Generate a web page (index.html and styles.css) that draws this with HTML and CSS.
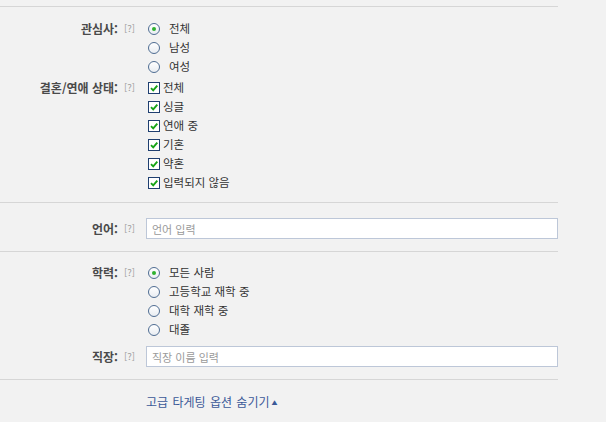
FILE: index.html
```html
<!DOCTYPE html>
<html lang="ko">
<head>
  <meta charset="UTF-8">
  <title>고급 타게팅 옵션</title>
  <link rel="stylesheet" href="styles.css">
</head>
<body>
  <div class="targeting">

    <div class="section">
      <div class="field">
        <label class="field-label">관심사:</label>
        <span class="help">[?]</span>
        <div class="options">
          <div class="option"><span class="radio checked"></span><span class="radio-text">전체</span></div>
          <div class="option"><span class="radio"></span><span class="radio-text">남성</span></div>
          <div class="option"><span class="radio"></span><span class="radio-text">여성</span></div>
        </div>
      </div>
      <div class="field">
        <label class="field-label">결혼/연애 상태:</label>
        <span class="help">[?]</span>
        <div class="options">
          <div class="option"><span class="checkbox checked"><svg viewBox="0 0 10 10"><path d="M2 5.2 L4.2 7.4 L8.3 2.6" /></svg></span>전체</div>
          <div class="option"><span class="checkbox checked"><svg viewBox="0 0 10 10"><path d="M2 5.2 L4.2 7.4 L8.3 2.6" /></svg></span>싱글</div>
          <div class="option"><span class="checkbox checked"><svg viewBox="0 0 10 10"><path d="M2 5.2 L4.2 7.4 L8.3 2.6" /></svg></span>연애 중</div>
          <div class="option"><span class="checkbox checked"><svg viewBox="0 0 10 10"><path d="M2 5.2 L4.2 7.4 L8.3 2.6" /></svg></span>기혼</div>
          <div class="option"><span class="checkbox checked"><svg viewBox="0 0 10 10"><path d="M2 5.2 L4.2 7.4 L8.3 2.6" /></svg></span>약혼</div>
          <div class="option"><span class="checkbox checked"><svg viewBox="0 0 10 10"><path d="M2 5.2 L4.2 7.4 L8.3 2.6" /></svg></span>입력되지 않음</div>
        </div>
      </div>
    </div>

    <div class="section section-input">
      <div class="field field-inline">
        <label class="field-label" for="language">언어:</label>
        <span class="help">[?]</span>
        <input type="text" id="language" class="text-input" placeholder="언어 입력">
      </div>
    </div>

    <div class="section section-edu">
      <div class="field">
        <label class="field-label">학력:</label>
        <span class="help">[?]</span>
        <div class="options">
          <div class="option"><span class="radio checked"></span><span class="radio-text">모든 사람</span></div>
          <div class="option"><span class="radio"></span><span class="radio-text">고등학교 재학 중</span></div>
          <div class="option"><span class="radio"></span><span class="radio-text">대학 재학 중</span></div>
          <div class="option"><span class="radio"></span><span class="radio-text">대졸</span></div>
        </div>
      </div>
      <div class="field field-inline field-work">
        <label class="field-label" for="workplace">직장:</label>
        <span class="help">[?]</span>
        <input type="text" id="workplace" class="text-input" placeholder="직장 이름 입력">
      </div>
    </div>

    <div class="section section-link">
      <a href="#" class="toggle-link">고급 타게팅 옵션 숨기기<span class="arrow">▲</span></a>
    </div>

  </div>
</body>
</html>
```

FILE: styles.css
```css
body {
  margin: 0;
  background-color: #f2f2f2;
  font-family: "Noto Sans CJK KR", "Liberation Sans", sans-serif;
  font-size: 11.5px;
  color: #333;
}

.targeting {
  width: 558px;
  margin-top: 6px;
}

.section {
  border-top: 1px solid #d6d6d6;
  padding: 12px 0 10px;
}

.field {
  display: grid;
  grid-template-columns: 118px 28px 412px;
  align-items: start;
}

.field + .field {
  margin-top: 2px;
}

.field-label {
  text-align: right;
  font-weight: bold;
  font-size: 12px;
  line-height: 19px;
  color: #4a4a4a;
}

.help {
  padding-left: 6px;
  font-size: 9.5px;
  line-height: 19px;
  color: #a0a0a0;
}

.option {
  display: flex;
  align-items: center;
  height: 19px;
  line-height: 19px;
  white-space: nowrap;
}

.radio {
  box-sizing: border-box;
  width: 12px;
  height: 12px;
  margin-left: 2px;
  margin-right: 9px;
  border: 1px solid #4f6d92;
  border-radius: 50%;
  background: linear-gradient(#ffffff, #e9edf2);
  display: flex;
  align-items: center;
  justify-content: center;
}

.radio.checked::after {
  content: "";
  width: 4px;
  height: 4px;
  border-radius: 50%;
  background-color: #2fb12f;
}

.checkbox {
  box-sizing: border-box;
  width: 12px;
  height: 12px;
  margin-left: 2px;
  margin-right: 3px;
  border: 1px solid #1f3f70;
  background-color: #fff;
  display: flex;
}

.checkbox svg {
  width: 10px;
  height: 10px;
}

.checkbox path {
  fill: none;
  stroke: #16a316;
  stroke-width: 1.9;
}

/* input rows */
.field-inline {
  align-items: center;
}

.section-input {
  padding: 15px 0 12px;
}

.section-edu {
  padding: 11px 0 12px;
}

.field + .field-work {
  margin-top: 7px;
}

.text-input {
  box-sizing: border-box;
  width: 412px;
  height: 21px;
  margin: 0;
  padding: 0 5px;
  border: 1px solid #bdc7d8;
  background-color: #fff;
  font-family: inherit;
  font-size: 11px;
  color: #333;
  outline: none;
}

.text-input::placeholder {
  color: #9a9a9a;
}

/* bottom link */
.section-link {
  padding: 12px 0 0 146px;
}

.toggle-link {
  font-size: 12px;
  line-height: 19px;
  color: #3b5998;
  text-decoration: none;
  word-spacing: 1px;
}

.arrow {
  font-size: 6px;
  margin-left: 2px;
  vertical-align: 2px;
}
```
